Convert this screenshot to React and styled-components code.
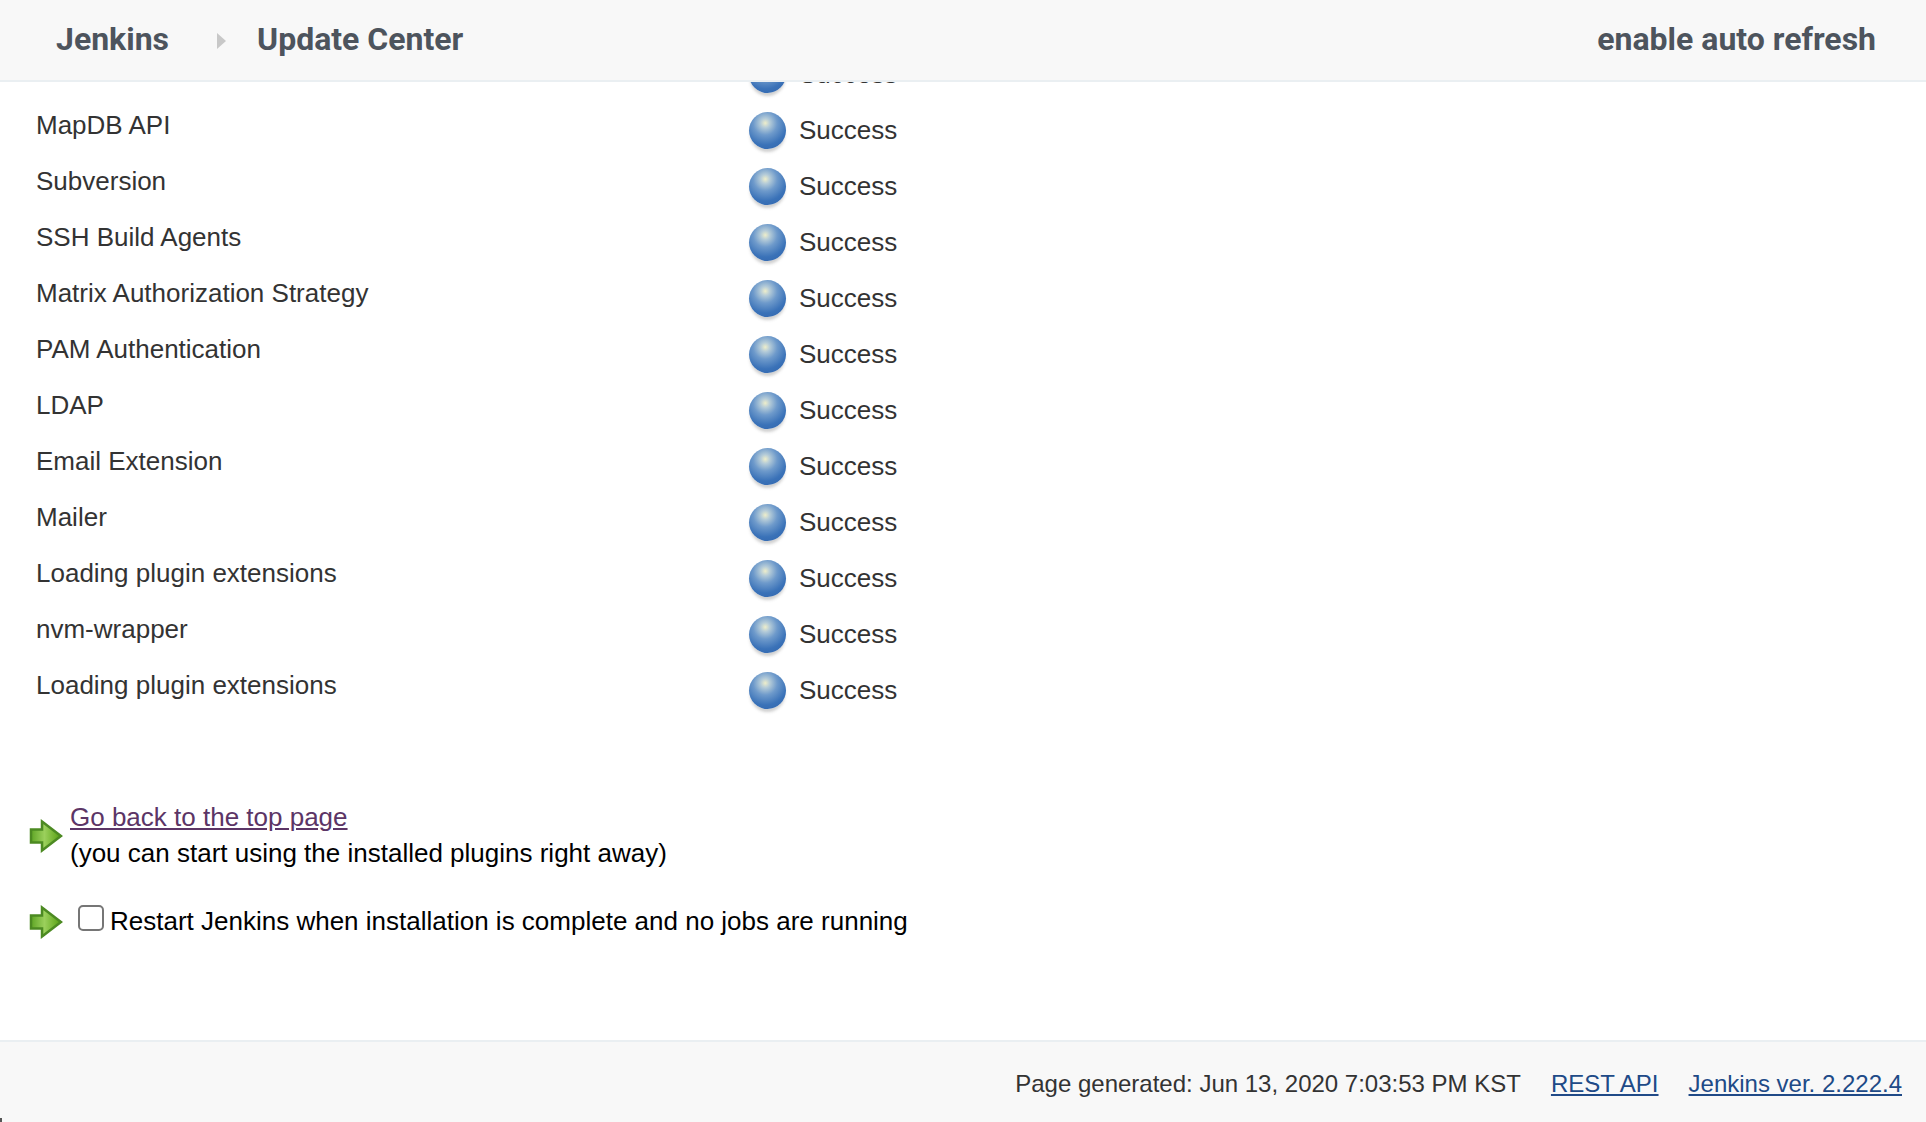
import React from "react";
import styled, { createGlobalStyle } from "styled-components";

const plugins = [
  "Git",
  "MapDB API",
  "Subversion",
  "SSH Build Agents",
  "Matrix Authorization Strategy",
  "PAM Authentication",
  "LDAP",
  "Email Extension",
  "Mailer",
  "Loading plugin extensions",
  "nvm-wrapper",
  "Loading plugin extensions",
];

const GlobalStyle = createGlobalStyle`
  html, body {
    margin: 0;
    padding: 0;
    height: 100%;
    overflow: hidden;
    background: #fff;
  }
  #root {
    height: 100%;
  }
`;

const Page = styled.div`
  height: 100vh;
  display: flex;
  flex-direction: column;
  font-family: "Liberation Sans", Arial, sans-serif;
  color: #333;
`;

const Header = styled.header`
  flex: none;
  position: relative;
  z-index: 1;
  box-sizing: border-box;
  height: 82px;
  padding: 0 50px 2px 56px;
  display: flex;
  align-items: center;
  background: #f8f8f8;
  border-bottom: 2px solid #eaeff2;
  font-family: Roboto, sans-serif;
  font-size: 32px;
  font-weight: 700;
  color: #4d545d;
`;

const Crumb = styled.span`
  display: block;
`;

const Separator = styled.svg`
  width: 9px;
  height: 16px;
  margin: 4px 31px 0 48px;
  fill: #c8c8c8;
`;

const AutoRefresh = styled.span`
  margin-left: auto;
`;

const Main = styled.main`
  flex: 1;
  min-height: 0;
  overflow: hidden;
  padding-left: 36px;
`;

const StatusTable = styled.div`
  margin-top: -36px;
  display: grid;
  grid-template-columns: 713px 1fr;
  grid-auto-rows: 56px;
  font-size: 26px;
`;

const PluginName = styled.div`
  line-height: 46px;
`;

const Status = styled.div`
  display: flex;
  align-items: center;
  gap: 13px;
`;

const Ball = styled.span`
  flex: none;
  width: 37px;
  height: 37px;
  border-radius: 50%;
  background: radial-gradient(
    circle at 44% 30%,
    #eeeecb 0,
    #b4cbd8 14%,
    #6e9acb 36%,
    #3a72b8 66%,
    #2f62aa 100%
  );
  box-shadow: 0 4px 3px -1px rgba(100, 100, 100, 0.3);
`;

const Notes = styled.div`
  margin-top: 81px;
  margin-left: -7px;
  color: #000;
  font-size: 26px;
`;

const Note = styled.div`
  display: flex;
  align-items: center;
  margin-bottom: ${(p) => p.$gap || 0}px;
`;

const Arrow = styled.svg`
  flex: none;
  width: 34px;
  height: 34px;
  margin: 1px 7px 0 0;
`;

const NoteText = styled.div`
  line-height: 36px;
`;

const BackLink = styled.a`
  color: #5c3566;
  display: block;
`;

const Check = styled.input`
  appearance: none;
  flex: none;
  width: 26px;
  height: 26px;
  margin: 0 6px 8px 8px;
  border: 2px solid #767676;
  border-radius: 5px;
  background: #fff;
`;

const Footer = styled.footer`
  flex: none;
  position: relative;
  box-sizing: border-box;
  height: 82px;
  padding: 4px 24px 0 0;
  display: flex;
  align-items: center;
  justify-content: flex-end;
  gap: 30px;
  background: #f8f8f8;
  border-top: 2px solid #eaeff2;
  font-size: 24px;

  &::before {
    content: "";
    position: absolute;
    left: 0;
    bottom: 0;
    width: 2px;
    height: 4px;
    background: #555;
  }
`;

const FooterLink = styled.a`
  color: #204a87;
`;

const GreenArrow = ({ id }) => (
  <Arrow viewBox="0 0 34 34">
    <defs>
      <linearGradient id={id} x1="0" y1="0" x2="1" y2="0">
        <stop offset="0" stopColor="#5fa526" />
        <stop offset="0.45" stopColor="#9bd05c" />
        <stop offset="1" stopColor="#559f10" />
      </linearGradient>
    </defs>
    <path
      d="M2 10.5H13V2.5L32 17 13 31.5V23.5H2z"
      fill={`url(#${id})`}
      stroke="#4c8a22"
      strokeWidth="2.5"
      strokeLinejoin="miter"
    />
  </Arrow>
);

export default function App() {
  return (
    <Page>
      <GlobalStyle />
      <Header>
        <Crumb>Jenkins</Crumb>
        <Separator viewBox="0 0 9 16">
          <path d="M0 0l9 8-9 8z" />
        </Separator>
        <Crumb>Update Center</Crumb>
        <AutoRefresh>enable auto refresh</AutoRefresh>
      </Header>
      <Main>
        <StatusTable>
          {plugins.map((name, i) => (
            <React.Fragment key={i}>
              <PluginName>{name}</PluginName>
              <Status>
                <Ball />
                Success
              </Status>
            </React.Fragment>
          ))}
        </StatusTable>
        <Notes>
          <Note $gap={33}>
            <GreenArrow id="arrow-back" />
            <NoteText>
              <BackLink href="#">Go back to the top page</BackLink>
              (you can start using the installed plugins right away)
            </NoteText>
          </Note>
          <Note>
            <GreenArrow id="arrow-restart" />
            <Check type="checkbox" />
            Restart Jenkins when installation is complete and no jobs are running
          </Note>
        </Notes>
      </Main>
      <Footer>
        <span>Page generated: Jun 13, 2020 7:03:53 PM KST</span>
        <FooterLink href="#">REST API</FooterLink>
        <FooterLink href="#">Jenkins ver. 2.222.4</FooterLink>
      </Footer>
    </Page>
  );
}
